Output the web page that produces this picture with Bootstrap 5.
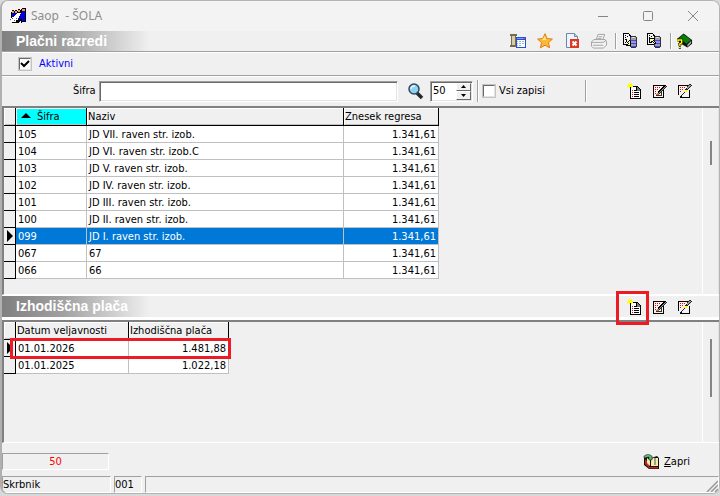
<!DOCTYPE html>
<html lang="sl">
<head>
<meta charset="utf-8">
<meta name="viewport" content="width=device-width, initial-scale=1">
<title>Saop - ŠOLA</title>
<link href="https://cdn.jsdelivr.net/npm/bootstrap@5.3.0/dist/css/bootstrap.min.css" rel="stylesheet">
<style>
body{background:#d9d9d9;font:11px/16px "DejaVu Sans Condensed","DejaVu Sans",sans-serif;font-stretch:condensed;color:#000}
button,input,table{font:inherit;color:inherit}
.app-window{min-height:calc(100vh - 2px);background:#f0f0f0;border:1px solid #b4b4b4;border-left:2px solid #b0b0b0;border-radius:8px;overflow:hidden;margin-bottom:2px}
.title-bar{height:30px;background:#f3f3f3;color:#8e8e8e;font:12px/16px "Noto Sans",sans-serif;padding:0 4px 0 8px}
.title-bar button{width:45px;height:28px}
.flat{border:0;background:none;padding:0;display:flex;align-items:center;justify-content:center}
.tool{width:16px;height:16px;flex:none}
.gap-wide{margin-right:11px}.gap-mid{margin-right:8px}.gap-slim{margin-right:5px}
.right-pad{padding-right:26px}
.icon-gap{gap:9px}
.section-bar{height:21px;background:linear-gradient(90deg,#808080 0,#a0a0a0 60px,#f0f0f0 148px);padding-left:14px}
.section-bar h2{font:bold 14px/20px "Liberation Sans",Arial,sans-serif;color:#fff;margin:0}
.etched-bottom{border-bottom:1px solid #a0a0a0;box-shadow:0 1px 0 #fff}
.vline{width:2px;flex:none;border-left:1px solid #a0a0a0;border-right:1px solid #fff}
.filter-row{height:24px;padding-left:17px;color:#00f}
.search-row{height:30px;padding:4px 26px 4px 71px}
.sunk{background:#fff;border:1px solid;border-color:#a0a0a0 #fff #fff #a0a0a0;box-shadow:inset 1px 1px 0 #696969,inset -1px -1px 0 #e3e3e3;border-radius:0;outline:0}
.tick{appearance:none;width:12px;height:12px;margin:0;flex:none;background:#fff;border:1px solid;border-color:#696969 #e3e3e3 #e3e3e3 #696969;outline:1px solid #c4c4c4}
.tick:checked{background:#fff url("data:image/svg+xml,%3Csvg xmlns='http://www.w3.org/2000/svg' viewBox='0 0 10 10'%3E%3Cpath d='M1 4l3 3 5-5' fill='none' stroke='black' stroke-width='2'/%3E%3C/svg%3E")}
.code-label{margin-right:3px}
.code-input{height:21px;min-width:40px}
.spin-box{width:43px;height:21px;padding:1px}
.spin-box input{width:25px;min-width:0;border:0;padding:0 0 0 1px;background:none;outline:0}
.spin-box button{width:15px;height:9px;background:#f0f0f0;border:1px solid;border-color:#fff #696969 #696969 #fff}
.all-label{margin-right:40px}
.grid-pane{border-top:2px solid #808080;border-left:2px solid #808080;border-bottom:1px solid #fff}
.grid-upper{padding-bottom:15px}
.scroll-strip{width:17px;flex:none;border-left:1px solid #fff;border-right:1px solid #e3e3e3;padding-left:7px}
.thumb{width:2px;background:#858585}
.thumb-a{height:24px;margin-top:33px}
.thumb-b{height:58px;margin-top:17px}
.data-grid{border-collapse:separate;border-spacing:0;table-layout:fixed;margin:0;line-height:15px;position:relative}
.data-grid th{height:18px;font-weight:400;background:#f0f0f0;border-right:1px solid #000;border-bottom:1px solid #000;padding:1px 1px;white-space:nowrap;box-shadow:inset 1px 1px 0 #fff,inset 0 -1px 0 #c0c0c0}
.data-grid td{height:17px;background:#fff;border-right:1px solid #c0c0c0;border-bottom:1px solid #c0c0c0;padding:1px 2px 0;white-space:nowrap;overflow:hidden}
.data-grid td:last-child{text-align:right;padding-right:2px}
.data-grid td:first-child{background:#f0f0f0;border-color:#000;padding:0;overflow:visible}
.data-grid th.sorted{background:#0ff}
.data-grid tr.picked td:not(:first-child){background:#0078d7;color:#fff}
.caret{display:block;width:0;border:6px solid transparent;border-left-color:#000;border-right:0;margin-left:3px}
.up{display:inline-block;border:5px solid transparent;border-bottom-color:#000;border-top:0;margin:0 6px 2px 4px}
.w-ind{width:12px}.w-code{width:71px}.w-name{width:257px}.w-sum{width:95px}.w-date{width:113px}.w-pay{width:100px}
.marked{position:relative}
.marked::after{content:"";position:absolute;border:3px solid #ed1c24;pointer-events:none}
.row-marked::after{left:6px;right:-2px;top:16px;height:21px}
.tool-marked::after{left:-11px;top:-8px;width:33px;height:34px}
.lower-bar{border-top:1px solid #fff;border-bottom:3px solid #fff}
.grid-lower{flex:1 0 121px}
.footer-row{padding:10px 29px 6px 0}
.thin-sunk{border:1px solid;border-color:#a0a0a0 #fff #fff #a0a0a0}
.count{width:107px;height:17px;line-height:16px;color:#f00;text-align:center}
.status-bar{gap:3px}
.status{height:17px;line-height:16px}
.status-user{width:109px}.status-no{width:28px}
.px{shape-rendering:crispEdges}
</style>
<script src="https://cdn.jsdelivr.net/npm/bootstrap@5.3.0/dist/js/bootstrap.bundle.min.js"></script>
</head>
<body>
<svg class="d-none">
 <symbol id="i-new" viewBox="0 0 16 16"><g class="px"><path d="M3 3h7l4 4v9H3z" fill="#000"/><path d="M5 4h4v4h4v7H4V4z" fill="#fff"/><path d="M10 4h1v1h1v1h1v2h-3z" fill="#777"/><path d="M7 7h2v1H7zM7 9h5v1H7zM7 11h5v1H7zM7 13h5v1H7z" fill="#000"/><path d="M5 7h1v1H5zM5 9h1v1H5zM5 11h1v1H5zM5 13h1v1H5z" fill="#f00"/><path d="M2 0h1v1h1V0h1v2h1v2H5v1H4V4H3v1H2V4H0V3h1V1h1z" fill="#ff0"/></g></symbol>
 <symbol id="i-edit" viewBox="0 0 16 16"><g class="px"><path d="M1 2h11v13H1z"/><path d="M2 3h9v11H2z" fill="#f4f4f4"/><path d="M3 4h1v1H3zM3 6h1v1H3zM3 8h1v1H3zM3 10h1v1H3zM5 4h1v1H5zM7 4h1v1H7zM5 6h1v1H5z" fill="#f00"/><path d="M4 12h6v1H4zM9 9h1v3H9z" fill="#333"/><path d="M12 2h2v1h-1v1h-1v1h-1v1h-1v1H9v1H8v1H7v1H6V8h1V7h1V6h1V5h1V4h1V3h1z" fill="#000"/><path d="M13 3h1v1h-1v1h-1v1h-1v1h-1v1H9v1H8v1H7v1H6v-1h1V9h1V8h1V7h1V6h1V5h1V4h1z" fill="#999"/><path d="M14 3h1v1h-1v1h-1v1h-1v1h-1v1h-1v1H9v1H8v1H7v-1h1V9h1V8h1V7h1V6h1V5h1V4h1z" fill="#222"/><path d="M5 10h2v2H4v-1h1z" fill="#e0702a"/></g></symbol>
 <symbol id="i-note" viewBox="0 0 16 16"><g class="px"><path d="M1 2h10v1H2v8h2v1H1zM3 14h1v-1h1v1h7V7h1v8H3z"/><path d="M2 3h8v4h2v7H5v-2H2z" fill="#f4f4f4"/><path d="M3 4h1v1H3zM3 6h1v1H3zM3 8h1v1H3zM5 4h1v1H5zM7 4h1v1H7zM5 6h1v1H5z" fill="#f00"/><path d="M12 1h2v1h1v1h-1v1h-1v1h-1v1h-1v1h-1v1H8V6h1V5h1V3h1V2h1z" fill="#222"/><path d="M12 2h2v1h-1v1h-1v1h-1v1h-1V4h1V3h1z" fill="#999"/><path d="M8 7h2v2H7V8h1z" fill="#ff0"/><path d="M7 9h1v1H7v1H6v1H5v1H4v1H3v-1h1v-1h1v-1h1v-1h1z" fill="#222"/></g></symbol>
 <symbol id="i-db" viewBox="0 0 16 16"><g class="px"><path d="M1 0h6v1h1v1h1v10H1z"/><path d="M2 1h5v2h1v8H2z" fill="#f4f4f4"/><path d="M3 2h1v1H3zM3 4h1v1H3zM5 3h1v1H5zM3 6h1v1H3zM3 9h1v1H3z"/><path d="M9 3h5v1h1v10h-1v1H9v-1H8V4h1z" fill="#333"/><path d="M9 4h5v10H9z" fill="#9c9cb4"/><path d="M10 4h3v1h-3z" fill="#ddd"/><path d="M9 7h5v1H9zM9 10h5v1H9zM9 13h5v1H9z" fill="#4646f0"/></g></symbol>
</svg>
<main class="app-window d-flex flex-column">
 <header class="title-bar d-flex align-items-center">
  <svg width="17" height="17" viewBox="0 0 17 17" class="px"><path d="M1 4h1V2h2v1h1V2h2v1h1V1h2v1h1V1h1V0h4v14h-4v1h-1v-3l-3 3H2z" fill="#000"/><path d="M2 5h10v6H2zM12 3h3v10h-3z" fill="#0000e0"/><path d="M2 3h2v2H2zM5 3h2v2H5zM8 2h2v2H8zM12 1h3v2h-3z" fill="#ff9b32"/><path d="M7 5h4v1h-1v2H9v2H8v2H6v2H1v-2H0v-2h2V9h2V8h1V7h1V6h1z" fill="#fff"/><path d="M0 11h1v1H0zM2 10h1v1H2zM4 12h1v1H4zM6 10h1v1H6z" fill="#555"/></svg>
  <span class="me-auto ps-1">Saop&nbsp; - ŠOLA</span>
  <button class="flat" aria-label="Minimiraj"><svg width="12" height="12" fill="none" stroke="#858585"><path d="M1 6.5h10"/></svg></button>
  <button class="flat" aria-label="Povečaj"><svg width="12" height="12" fill="none" stroke="#858585"><rect x="1.5" y="1.5" width="9" height="9" rx="1"/></svg></button>
  <button class="flat" aria-label="Zapri okno"><svg width="12" height="12" fill="none" stroke="#858585"><path d="M1 1l10 10M11 1L1 11"/></svg></button>
 </header>

 <div class="section-bar etched-bottom right-pad d-flex align-items-center flex-shrink-0">
  <h2 class="me-auto">Plačni razredi</h2>
  <div class="d-flex align-items-center">
   <button class="flat tool gap-wide" aria-label="Pogled"><svg width="17" height="16" viewBox="0 0 17 16" class="px"><path d="M0 1h7v2H6v9h1v2H0v-2h1V3H0z" fill="#766c50"/><path d="M2 3h3v9H2z" fill="#d8cda5"/><path d="M6 4h11v11H6z" fill="#2450d8"/><path d="M7 7h9v7H7z" fill="#fff"/><path d="M7 5h7v1H7z" fill="#6aa3ff"/><path d="M14 5h2v1h-2z" fill="#f44"/><path d="M7 8h2v1H7zM10 8h2v1h-2zM13 8h2v1h-2zM7 10h2v1H7zM10 10h2v1h-2zM13 10h2v1h-2zM7 12h2v1H7zM10 12h2v1h-2z" fill="#9ab4e0"/></svg></button>
   <button class="flat tool gap-wide" aria-label="Priljubljeno"><svg width="16" height="16" viewBox="0 0 16 16"><path d="M8 .7l2.200 4.800 5.200.6-3.900 3.500 1.100 5.200L8 12.200l-4.600 2.600 1.100-5.200L.6 6.100l5.200-.6z" fill="#ffba35" stroke="#e07c13"/><path d="M8 3l1 4H5z" fill="#ffe894"/></svg></button>
   <button class="flat tool gap-wide" aria-label="Izbriši"><svg width="16" height="16" viewBox="0 0 16 16"><path d="M2.500.5h8l3 3v11h-11z" fill="#eef5fd" stroke="#6888ad"/><path d="M10.500.5v3h3" fill="#bcd" stroke="#6888ad"/><path d="M6 6h9v9H6z" fill="#df3527"/><path d="M8.500 8.500l4 4M12.500 8.500l-4 4" stroke="#fff" stroke-width="2"/></svg></button>
   <button class="flat tool gap-mid" aria-label="Natisni"><svg width="17" height="16" viewBox="0 0 17 16" fill="#f4f4f4" stroke="#a0a0a0"><path d="M5.500 7l2-6h7l-2 6M3 6.500h12l1.500 2v4L13 15.500H2.500l-2-2V9z"/><path d="M1 9.500h12l3-2M2 12.500h11M8 3.500h4M7 5.500h4" fill="none"/></svg></button>
   <span class="vline align-self-stretch gap-slim"></span>
   <button class="flat tool gap-mid" aria-label="Uvozi"><svg width="16" height="16" class="px"><use href="#i-db"/><path d="M4 6h1v1h1v1h1V7h1v1h1v5H4v-1h1v-1h1v-1H5V9H4z" fill="#000"/><path d="M5 7v2h1v1h1v1H6v1h2V8H7v1H6V8z" fill="#ffff9e"/></svg></button>
   <button class="flat tool gap-mid" aria-label="Izvozi"><svg width="16" height="16" class="px"><use href="#i-db"/><path d="M3 5h6v2H8v1h1v1h1v2H8v-1H7V9H6v1H3z" fill="#000"/><path d="M4 6h4v1H7v1h1v1h1v1H8V9H7V8H5v1H4z" fill="#ffff9e"/></svg></button>
   <span class="vline align-self-stretch gap-slim"></span>
   <button class="flat tool" aria-label="Pomoč"><svg width="17" height="16" viewBox="0 0 17 16"><path d="M0 6l7-6 9 7v4l-5 4-8-5z" fill="#111"/><path d="M2 5l5-4 8 6-5 4z" fill="#078007"/><path d="M11 12l4-4v2l-4 4z" fill="#bbb"/><path d="M1 9V7h4v3L3 11v2M2 15h2" fill="none" stroke="#000" stroke-width="3"/><path d="M1 9V7h4v3L3 11v2M2 15h2" fill="none" stroke="#ff0" stroke-width="1.500"/></svg></button>
  </div>
 </div>

 <div class="filter-row etched-bottom d-flex align-items-center">
  <input class="tick" type="checkbox" id="active" checked><label for="active" class="ps-2">Aktivni</label>
 </div>

 <form class="search-row d-flex align-items-center" onsubmit="return false">
  <label for="code" class="code-label">Šifra</label>
  <input id="code" type="text" class="sunk code-input flex-grow-1">
  <button class="flat ms-2 me-1" aria-label="Išči"><svg width="20" height="18" viewBox="0 0 20 18"><path d="M10 10l6 6" stroke="#202830" stroke-width="3.500"/><circle cx="8" cy="7" r="5" fill="#8ed1f5" stroke="#34495e" stroke-width="1.500"/><path d="M5 7c0-3 3-3 4-3" stroke="#e5f7ff" stroke-width="1.500" fill="none"/></svg></button>
  <div class="sunk spin-box d-flex">
   <input type="text" value="50" aria-label="Število zapisov">
   <div class="d-flex flex-column">
    <button class="flat" type="button" aria-label="Več"><svg width="5" height="3"><path d="M0 3h5L2.500 0z"/></svg></button>
    <button class="flat" type="button" aria-label="Manj"><svg width="5" height="3"><path d="M0 0h5L2.500 3z"/></svg></button>
   </div>
  </div>
  <span class="vline align-self-stretch ms-1 me-1"></span>
  <input class="tick" type="checkbox" id="all"><label for="all" class="ps-1 all-label text-nowrap">Vsi zapisi</label>
  <span class="vline align-self-stretch me-4"></span>
  <div class="d-flex icon-gap ps-3">
   <button class="flat tool" type="button" aria-label="Nov zapis"><svg width="16" height="16"><use href="#i-new"/></svg></button>
   <button class="flat tool" type="button" aria-label="Uredi"><svg width="16" height="16"><use href="#i-edit"/></svg></button>
   <button class="flat tool" type="button" aria-label="Popravi"><svg width="16" height="16"><use href="#i-note"/></svg></button>
  </div>
 </form>

 <section class="grid-pane d-flex">
  <div class="flex-grow-1 grid-upper">
   <table class="data-grid">
    <colgroup><col class="w-ind"><col class="w-code"><col class="w-name"><col class="w-sum"></colgroup>
    <thead><tr><th></th><th class="sorted"><span class="up"></span>Šifra</th><th>Naziv</th><th>Znesek regresa</th></tr></thead>
    <tbody>
     <tr><td></td><td>105</td><td>JD VII. raven str. izob.</td><td>1.341,61</td></tr>
     <tr><td></td><td>104</td><td>JD VI. raven str. izob.C</td><td>1.341,61</td></tr>
     <tr><td></td><td>103</td><td>JD V. raven str. izob.</td><td>1.341,61</td></tr>
     <tr><td></td><td>102</td><td>JD IV. raven str. izob.</td><td>1.341,61</td></tr>
     <tr><td></td><td>101</td><td>JD III. raven str. izob.</td><td>1.341,61</td></tr>
     <tr><td></td><td>100</td><td>JD II. raven str. izob.</td><td>1.341,61</td></tr>
     <tr class="picked"><td><span class="caret"></span></td><td>099</td><td>JD I. raven str. izob.</td><td>1.341,61</td></tr>
     <tr><td></td><td>067</td><td>67</td><td>1.341,61</td></tr>
     <tr><td></td><td>066</td><td>66</td><td>1.341,61</td></tr>
    </tbody>
   </table>
  </div>
  <div class="scroll-strip"><div class="thumb thumb-a"></div></div>
 </section>

 <div class="lower-bar right-pad d-flex align-items-center">
  <div class="section-bar flex-grow-1"><h2>Izhodiščna plača</h2></div>
  <div class="d-flex icon-gap">
   <button class="flat tool marked tool-marked" aria-label="Nova plača"><svg width="16" height="16"><use href="#i-new"/></svg></button>
   <button class="flat tool" aria-label="Uredi plačo"><svg width="16" height="16"><use href="#i-edit"/></svg></button>
   <button class="flat tool" aria-label="Popravi plačo"><svg width="16" height="16"><use href="#i-note"/></svg></button>
  </div>
 </div>

 <section class="grid-pane grid-lower d-flex">
  <div class="flex-grow-1">
   <div class="d-inline-block marked row-marked">
    <table class="data-grid">
     <colgroup><col class="w-ind"><col class="w-date"><col class="w-pay"></colgroup>
     <thead><tr><th></th><th>Datum veljavnosti</th><th>Izhodiščna plača</th></tr></thead>
     <tbody>
      <tr><td><span class="caret"></span></td><td>01.01.2026</td><td>1.481,88</td></tr>
      <tr><td></td><td>01.01.2025</td><td>1.022,18</td></tr>
     </tbody>
    </table>
   </div>
  </div>
  <div class="scroll-strip"><div class="thumb thumb-b"></div></div>
 </section>

 <div class="footer-row d-flex align-items-center justify-content-between">
  <div class="thin-sunk count">50</div>
  <button class="flat"><svg width="17" height="16" viewBox="0 0 17 16" class="me-1"><path d="M1 3l3-2 4 3 6-2 2 2v11H6L1 11z" fill="#111"/><path d="M2 5l4 4v5l-4-4z" fill="#c22"/><path d="M6 13h9v1.500H6z" fill="#c22"/><path d="M4 4l3 2v6L4 9zM8 6l2-2h5v8H8z" fill="#f3eeb0"/><path d="M12 4v7" stroke="#555"/><path d="M1 2l4-2 4 2v4H6V3L1 4z" fill="#5fb878" stroke="#111" stroke-width=".5"/></svg><span><u>Z</u>apri</span></button>
 </div>

 <footer class="status-bar d-flex">
  <div class="thin-sunk status status-user">Skrbnik</div>
  <div class="thin-sunk status status-no">001</div>
  <div class="thin-sunk status flex-grow-1 d-flex justify-content-end align-items-end"><svg width="12" height="12" stroke="#999"><path d="M1 12L12 1M5 12l7-7M9 12l3-3" stroke-width="1.500"/></svg></div>
 </footer>
</main>
</body>
</html>
